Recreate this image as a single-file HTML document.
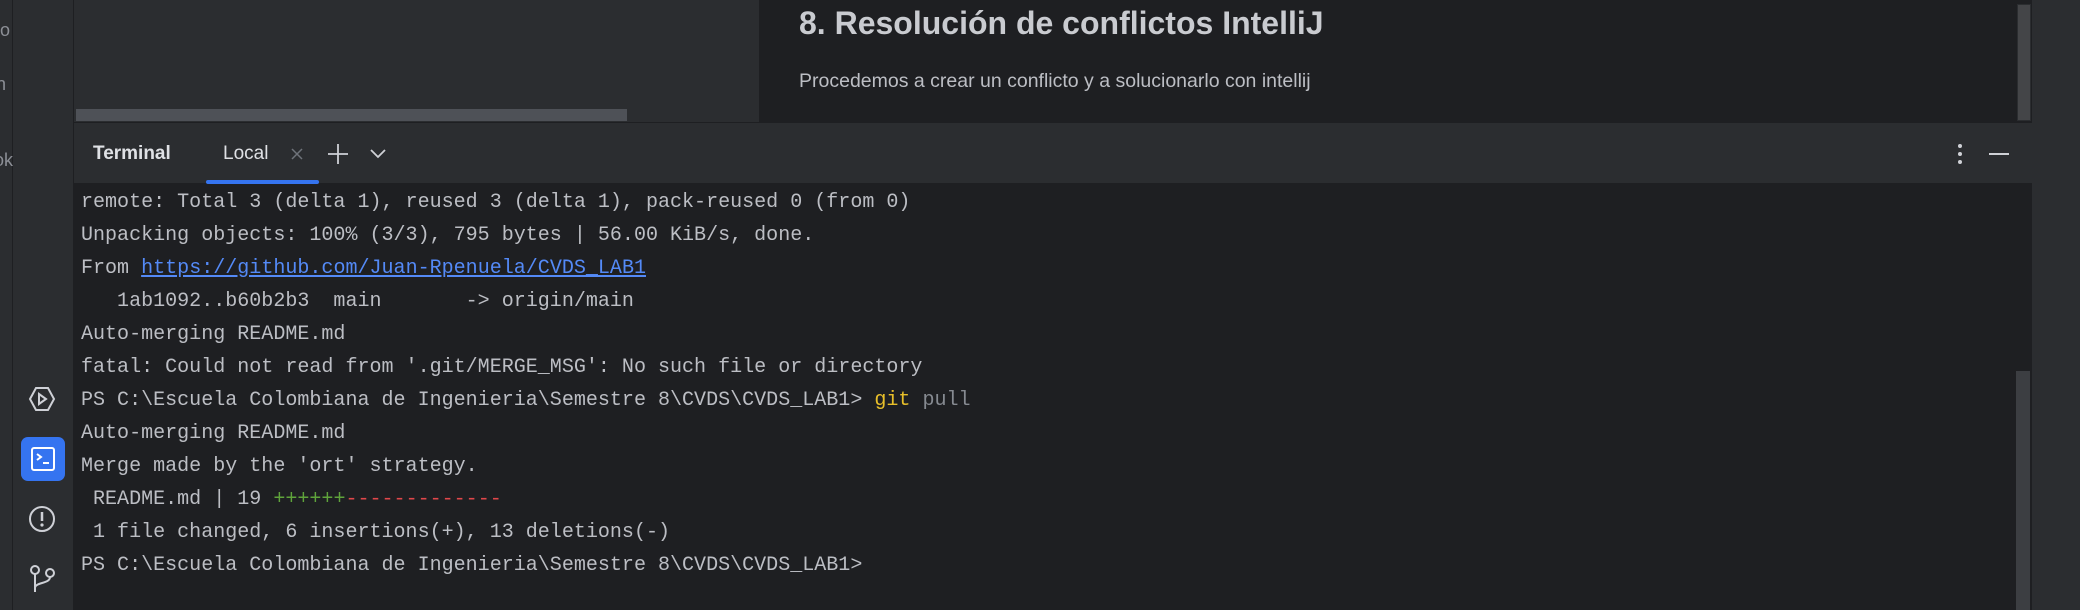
<!DOCTYPE html>
<html><head><meta charset="utf-8"><style>
*{margin:0;padding:0;box-sizing:border-box}
body{width:2080px;height:610px;background:#1e1f22;position:relative;overflow:hidden;font-family:"Liberation Sans",sans-serif}
.a{position:absolute}
.term{font-family:"Liberation Mono",monospace;font-size:20.05px;color:#bcbec4;white-space:pre;line-height:33px}
</style></head><body>
<div class="a" style="left:0;top:0;width:12px;height:610px;background:#2b2d30"></div>
<div class="a" style="left:12px;top:0;width:1px;height:610px;background:#1e1f22"></div>
<div class="a" style="left:0;top:20px;color:#8c8f96;font-size:18px">o</div>
<div class="a" style="left:-4px;top:74px;color:#8c8f96;font-size:18px">n</div>
<div class="a" style="left:-6px;top:150px;color:#8c8f96;font-size:18px">ok</div>
<div class="a" style="left:13px;top:0;width:61px;height:610px;background:#2b2d30"></div>
<div class="a" style="left:73px;top:0;width:1px;height:610px;background:#1e1f22"></div>
<div class="a" style="left:74px;top:0;width:685px;height:122px;background:#2b2d30"></div>
<div class="a" style="left:76px;top:109px;width:551px;height:12px;background:#4e5157"></div>
<div class="a" style="left:759px;top:0;width:1273px;height:122px;background:#1e1f22"></div>
<div class="a" style="left:799px;top:5px;font-weight:bold;font-size:32px;color:#c9cbd0;white-space:nowrap">8. Resolución de conflictos IntelliJ</div>
<div class="a" style="left:799px;top:70px;font-size:19.5px;color:#bcbec4;white-space:nowrap">Procedemos a crear un conflicto y a solucionarlo con intellij</div>
<div class="a" style="left:2017px;top:4px;width:14px;height:117px;background:#444548;border:1px solid #2b2d30"></div>
<div class="a" style="left:2032px;top:0;width:48px;height:610px;background:#2b2d30"></div>
<div class="a" style="left:74px;top:122px;width:1958px;height:1px;background:#1e1f22"></div>
<div class="a" style="left:74px;top:123px;width:1958px;height:60px;background:#2b2d30"></div>
<div class="a" style="left:93px;top:143px;font-size:19px;font-weight:bold;color:#dfe1e5">Terminal</div>
<div class="a" style="left:223px;top:143px;font-size:19px;color:#dfe1e5">Local</div>
<svg class="a" style="left:289px;top:146px" width="16" height="16"><path d="M3 3L13 13M13 3L3 13" stroke="#6f737a" stroke-width="1.5"/></svg>
<svg class="a" style="left:327px;top:143px" width="22" height="22"><path d="M11 1V21M1 11H21" stroke="#cfd1d6" stroke-width="1.8"/></svg>
<svg class="a" style="left:369px;top:148px" width="18" height="12"><path d="M2 2L9 9L16 2" stroke="#cfd1d6" stroke-width="1.8" fill="none"/></svg>
<div class="a" style="left:206px;top:180px;width:113px;height:4px;border-radius:2px;background:#3574f0"></div>
<svg class="a" style="left:1955px;top:142px" width="10" height="24"><circle cx="5" cy="4" r="2" fill="#cfd1d6"/><circle cx="5" cy="12" r="2" fill="#cfd1d6"/><circle cx="5" cy="20" r="2" fill="#cfd1d6"/></svg>
<div class="a" style="left:1989px;top:153px;width:20px;height:2px;background:#cfd1d6"></div>
<div class="a" style="left:2016px;top:371px;width:14px;height:239px;background:#3c3e42"></div>
<svg class="a" style="left:28px;top:385px" width="28" height="28" viewBox="0 0 28 28"><path d="M8 3H20L26 14L20 25H8L2 14Z" fill="none" stroke="#ced0d6" stroke-width="2"/><path d="M11 9L18 14L11 19Z" fill="none" stroke="#ced0d6" stroke-width="2"/></svg>
<div class="a" style="left:21px;top:437px;width:44px;height:44px;border-radius:7px;background:#3574f0"></div>
<svg class="a" style="left:30px;top:446px" width="26" height="26" viewBox="0 0 26 26"><rect x="2" y="2" width="22" height="22" rx="2" fill="none" stroke="#fff" stroke-width="2"/><path d="M7 8L11 11L7 14M13 17H19" stroke="#fff" stroke-width="2" fill="none"/></svg>
<svg class="a" style="left:28px;top:505px" width="28" height="28"><circle cx="14" cy="14" r="12" fill="none" stroke="#ced0d6" stroke-width="2"/><path d="M14 7V16" stroke="#ced0d6" stroke-width="2.5"/><circle cx="14" cy="20" r="1.6" fill="#ced0d6"/></svg>
<svg class="a" style="left:29px;top:564px" width="28" height="30"><circle cx="6" cy="6" r="4" fill="none" stroke="#ced0d6" stroke-width="2"/><circle cx="21" cy="9" r="4" fill="none" stroke="#ced0d6" stroke-width="2"/><path d="M6 10V28M21 13C21 20 6 18 6 24" fill="none" stroke="#ced0d6" stroke-width="2"/></svg>
<div class="a term" style="left:81px;top:186px">remote: Total 3 (delta 1), reused 3 (delta 1), pack-reused 0 (from 0)
Unpacking objects: 100% (3/3), 795 bytes | 56.00 KiB/s, done.
From <span style="color:#548af7;text-decoration:underline">https://github.com/Juan-Rpenuela/CVDS_LAB1</span>
   1ab1092..b60b2b3  main       -> origin/main
Auto-merging README.md
fatal: Could not read from '.git/MERGE_MSG': No such file or directory
PS C:\Escuela Colombiana de Ingenieria\Semestre 8\CVDS\CVDS_LAB1> <span style="color:#e8bf2a">git</span> <span style="color:#868a91">pull</span>
Auto-merging README.md
Merge made by the 'ort' strategy.
 README.md | 19 <span style="color:#5fa33b">++++++</span><span style="color:#e0474a">-------------</span>
 1 file changed, 6 insertions(+), 13 deletions(-)
PS C:\Escuela Colombiana de Ingenieria\Semestre 8\CVDS\CVDS_LAB1></div>
</body></html>
